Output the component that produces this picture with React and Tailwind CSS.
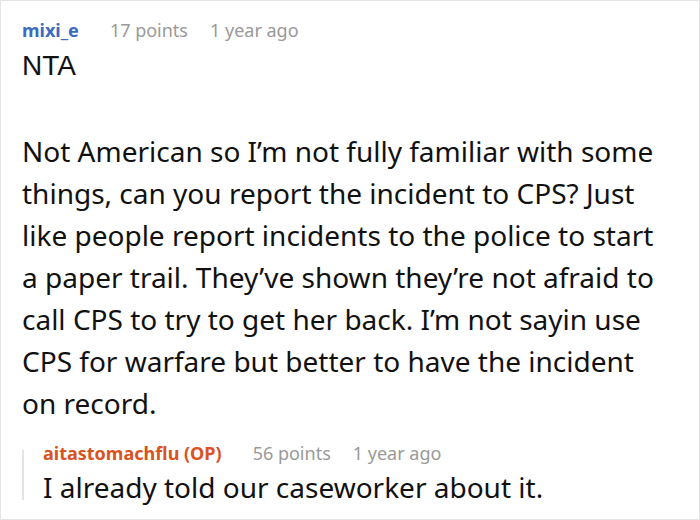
export default function App() {
  const noto = { fontFamily: '"Noto Sans", sans-serif' };
  return (
    <div className="w-[700px] h-[520px] bg-white border border-[#e3e3e3] box-border overflow-hidden" style={noto}>
      <div className="pl-[21px] pr-[28px] pt-[16px]">
        <div className="flex items-baseline text-[18px] leading-[26px]">
          <span className="font-bold text-[#3a6bbf]">mixi_e</span>
          <span className="ml-[31px] text-[#999999]">17 points</span>
          <span className="ml-[22px] text-[#999999]">1 year ago</span>
        </div>
        <div className="mt-[2px] text-[28px] leading-[42px] text-[#111111]">
          <p className="font-['Liberation_Sans',sans-serif]">NTA</p>
          <p className="mt-[43px]">
            Not American so I’m not fully familiar with some things, can you report the incident to CPS? Just like people report incidents to the police to start a paper trail. They’ve shown they’re not afraid to call CPS to try to get her back. I’m not sayin use CPS for warfare but better to have the incident on record.
          </p>
        </div>
        <div className="mt-[16px] flex">
          <div className="mt-[10px] h-[50px] w-[2px] shrink-0 bg-[#e4e4e4]"></div>
          <div className="ml-[19px]">
            <div className="flex items-baseline text-[18px] leading-[26px]">
              <span className="font-bold text-[#d9531e]">aitastomachflu (OP)</span>
              <span className="ml-[31px] text-[#999999]">56 points</span>
              <span className="ml-[22px] text-[#999999]">1 year ago</span>
            </div>
            <p className="text-[28px] leading-[42px] text-[#111111]">I already told our caseworker about it.</p>
          </div>
        </div>
      </div>
    </div>
  );
}
